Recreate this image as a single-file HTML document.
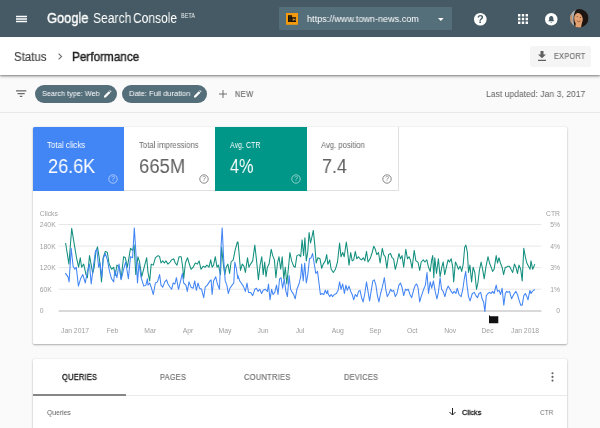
<!DOCTYPE html>
<html><head><meta charset="utf-8">
<style>
*{box-sizing:border-box;margin:0;padding:0}
html,body{width:600px;height:428px;overflow:hidden;background:#fafafa;font-family:"Liberation Sans",sans-serif;}
.abs{position:absolute}
#hdr{left:0;top:0;width:600px;height:37px;background:#455a64}
#crumb{left:0;top:37px;width:600px;height:38px;background:#fff;box-shadow:0 1px 1.500px rgba(0,0,0,.33),0 2px 3px rgba(0,0,0,.18)}
.t{position:absolute;white-space:nowrap;line-height:1;transform-origin:0 0;will-change:transform}
svg{will-change:transform}
.chip{position:absolute;top:84.700px;height:18.100px;border-radius:9.050px;background:#546e7a}
.card{border-radius:1.500px;overflow:hidden;position:absolute;left:33px;width:534px;background:#fff;box-shadow:0 1px 2px rgba(0,0,0,.3),0 0 1px rgba(0,0,0,.2)}
.tile{position:absolute;top:0;height:64px;width:91px}
</style></head><body>
<div class="abs" id="hdr"></div>
<div class="abs" id="crumb"></div>

<!-- header content -->
<svg class="abs" style="left:15.700px;top:15px" width="11" height="8" viewBox="0 0 11 8"><path d="M0 1.450h11M0 4h11M0 6.550h11" stroke="#fff" stroke-width="1.400"/></svg>
<div class="abs" style="left:279px;top:7px;width:173px;height:23px;background:#546e7a;border-radius:1px"></div>
<svg class="abs" style="left:286px;top:12.900px" width="12" height="11.800" viewBox="0 0 12 11.800"><rect width="12" height="11.800" fill="#f39a0f"/><path d="M2 2.300h4.100v2h3.900v4.600H2z" fill="#15100a"/><path d="M2.700 3.500h2.600M2.700 5h2.600M2.700 6.500h2.600M2.700 8h2.600" stroke="#6b4a10" stroke-width=".5"/><path d="M6.700 5.300h.8v1h1.300v-1h.6v2.800h-.6v-1H7.500v1h-.8z" fill="#f0a23a"/></svg>
<svg class="abs" style="left:437.600px;top:17.500px" width="5.600" height="3" viewBox="0 0 5.600 3"><path d="M0 0h5.600L2.800 3z" fill="#fff"/></svg>
<!-- help -->
<svg class="abs" style="left:474.100px;top:12.600px" width="12.600" height="12.600" viewBox="0 0 12.600 12.600"><circle cx="6.300" cy="6.300" r="6.300" fill="#fff"/><text x="6.300" y="10.200" font-size="11" font-weight="bold" fill="#455a64" text-anchor="middle" font-family="Liberation Sans, sans-serif">?</text></svg>
<!-- apps -->
<svg class="abs" style="left:518px;top:14px" width="10" height="10" viewBox="0 0 10 10" fill="#fff"><path d="M0 0h2.4v2.4H0zM3.8 0h2.4v2.4H3.8zM7.6 0H10v2.4H7.6zM0 3.8h2.4v2.4H0zM3.800 3.8h2.4v2.4H3.8zM7.6 3.8H10v2.4H7.6zM0 7.6h2.4V10H0zM3.8 7.6h2.4V10H3.8zM7.6 7.6H10V10H7.6z"/></svg>
<!-- bell -->
<svg class="abs" style="left:544.600px;top:12.500px" width="12.500" height="12.500" viewBox="0 0 12.500 12.500"><circle cx="6.250" cy="6.250" r="6.250" fill="#fff"/><path d="M6.250 3c-1.400 0-2.100 1-2.100 2.300v1.800l-.8.800v.400h5.800v-.400l-.8-.800V5.300c0-1.300-.7-2.300-2.100-2.300zM5.500 8.900a.75.750 0 0 0 1.500 0z" fill="#455a64"/></svg>
<!-- avatar -->
<svg class="abs" style="left:570px;top:9.400px" width="18.500" height="18.500" viewBox="0 0 18.500 18.500"><defs><clipPath id="av"><circle cx="9.250" cy="9.250" r="9.250"/></clipPath></defs><g clip-path="url(#av)"><rect width="18.500" height="18.500" fill="#1d1512"/><path d="M0 0h6.500C3.500 3 2.500 12 5 18.500H0z" fill="#aab4b8"/><path d="M0 6l2.500-.5v9L0 15z" fill="#c98a5c" opacity=".7"/><ellipse cx="8.600" cy="9.300" rx="4.400" ry="6.600" fill="#e3a070"/><path d="M6 13h6l-1 6H5z" fill="#e3a070"/><path d="M5 5.500C6 2 10 1.500 12.500 4 13.500 6 13.800 8 13 11 12.600 7 11 4.500 8.500 4 7 4 6 4.500 5 6z" fill="#1d1512"/><circle cx="7.200" cy="7.600" r=".6" fill="#7a5a48"/><circle cx="10.400" cy="8.400" r=".6" fill="#6a4030"/><path d="M6.800 11.800q2 1.600 4 0" stroke="#8a4a2c" stroke-width=".7" fill="none"/></g></svg>

<!-- breadcrumb -->
<svg class="abs" style="left:57.800px;top:53.100px" width="4.500" height="7" viewBox="0 0 4.500 7"><path d="M.6.600L3.600 3.500.6 6.400" stroke="#6e6e6e" stroke-width="1.100" fill="none"/></svg>
<div class="abs" style="left:530px;top:46px;width:61px;height:21px;background:#f5f5f5;border-radius:2px"></div>
<svg class="abs" style="left:538px;top:51px" width="8" height="10" viewBox="0 0 8 10"><path d="M2.500 0h3v3.500H8L4 7.200 0 3.500h2.500zM0 8.700h8V10H0z" fill="#616161"/></svg>

<!-- filter bar -->
<svg class="abs" style="left:16px;top:90px" width="11" height="8" viewBox="0 0 11 8"><path d="M0 .900h10.300M1.500 3.700h7.200M3.900 6.400h2.400" stroke="#686868" stroke-width="1.250"/></svg>
<div class="chip" style="left:35px;width:82px"></div>
<svg class="abs" style="left:103.800px;top:90.200px" width="7.600" height="7.600" viewBox="0 0 8 8"><path d="M0 8v-1.800L5 1.200 6.800 3 1.800 8zM5.600.600L6.200 0l1.800 1.800-.6.600z" fill="#fff"/></svg>
<div class="chip" style="left:122px;width:85px"></div>
<svg class="abs" style="left:194.200px;top:90.200px" width="7.600" height="7.600" viewBox="0 0 8 8"><path d="M0 8v-1.800L5 1.200 6.800 3 1.800 8zM5.600.600L6.200 0l1.800 1.800-.6.600z" fill="#fff"/></svg>
<svg class="abs" style="left:219px;top:90px" width="8" height="8" viewBox="0 0 8 8"><path d="M4 0v8M0 4h8" stroke="#616161" stroke-width=".900"/></svg>
<div class="abs" style="left:0;top:112px;width:600px;height:1px;background:#e8e8e8"></div>

<!-- card 1 -->
<div class="card" style="top:126.700px;height:217px">
  <div class="tile" style="left:0;background:#4285f4"></div>
  <div class="tile" style="left:91px;background:#fff;border-bottom:1px solid #e0e0e0"></div>
  <div class="tile" style="left:182.200px;width:91.800px;background:#009688"></div>
  <div class="tile" style="left:274px;width:92px;background:#fff;border-bottom:1px solid #e0e0e0;border-right:1px solid #e0e0e0"></div>
</div>

<svg class="abs" style="left:107.55px;top:174.40px;opacity:.65" width="10" height="10" viewBox="0 0 10 10"><circle cx="5" cy="5" r="4.200" fill="none" stroke="#fff" stroke-width=".850"/><text x="5" y="7.400" font-size="6.600" fill="#fff" text-anchor="middle" font-family="Liberation Sans, sans-serif">?</text></svg>
<svg class="abs" style="left:198.60px;top:174.40px;opacity:.9" width="10" height="10" viewBox="0 0 10 10"><circle cx="5" cy="5" r="4.200" fill="none" stroke="#616161" stroke-width=".850"/><text x="5" y="7.400" font-size="6.600" fill="#616161" text-anchor="middle" font-family="Liberation Sans, sans-serif">?</text></svg>
<svg class="abs" style="left:290.50px;top:174.40px;opacity:.65" width="10" height="10" viewBox="0 0 10 10"><circle cx="5" cy="5" r="4.200" fill="none" stroke="#fff" stroke-width=".850"/><text x="5" y="7.400" font-size="6.600" fill="#fff" text-anchor="middle" font-family="Liberation Sans, sans-serif">?</text></svg>
<svg class="abs" style="left:381.60px;top:174.40px;opacity:.9" width="10" height="10" viewBox="0 0 10 10"><circle cx="5" cy="5" r="4.200" fill="none" stroke="#616161" stroke-width=".850"/><text x="5" y="7.400" font-size="6.600" fill="#616161" text-anchor="middle" font-family="Liberation Sans, sans-serif">?</text></svg>
<!-- chart svg -->
<svg class="abs" id="chart" style="left:0;top:200px" width="600" height="145" viewBox="0 200 600 145" font-family="Liberation Sans, sans-serif">
<path d="M58.6 224.55H541.3" stroke="#e7e7e7" stroke-width="1"/>
<path d="M58.6 246.10H541.3" stroke="#e7e7e7" stroke-width="1"/>
<path d="M58.6 267.65H541.3" stroke="#e7e7e7" stroke-width="1"/>
<path d="M58.6 289.20H541.3" stroke="#e7e7e7" stroke-width="1"/>
<path d="M58.600 310.900H541.500" stroke="#cdcdcd" stroke-width="1.500"/>
<g font-size="6.800" fill="#9e9e9e">
<text x="39.800" y="216">Clicks</text>
<text x="39.800" y="227.0">240K</text>
<text x="39.800" y="248.5">180K</text>
<text x="39.800" y="270.0">120K</text>
<text x="39.800" y="291.5">60K</text>
<text x="39.800" y="313.0">0</text>
<text x="560" y="216" text-anchor="end">CTR</text>
<text x="560" y="227.0" text-anchor="end">5%</text>
<text x="560" y="248.5" text-anchor="end">4%</text>
<text x="560" y="270.0" text-anchor="end">3%</text>
<text x="560" y="291.5" text-anchor="end">1%</text>
<text x="560" y="313.0" text-anchor="end">0</text>
<text x="75.0" y="332.800" text-anchor="middle">Jan 2017</text>
<text x="112.5" y="332.800" text-anchor="middle">Feb</text>
<text x="150.2" y="332.800" text-anchor="middle">Mar</text>
<text x="188.0" y="332.800" text-anchor="middle">Apr</text>
<text x="225.0" y="332.800" text-anchor="middle">May</text>
<text x="263.0" y="332.800" text-anchor="middle">Jun</text>
<text x="300.0" y="332.800" text-anchor="middle">Jul</text>
<text x="337.7" y="332.800" text-anchor="middle">Aug</text>
<text x="375.2" y="332.800" text-anchor="middle">Sep</text>
<text x="412.2" y="332.800" text-anchor="middle">Oct</text>
<text x="450.2" y="332.800" text-anchor="middle">Nov</text>
<text x="487.5" y="332.800" text-anchor="middle">Dec</text>
<text x="525.0" y="332.800" text-anchor="middle">Jan 2018</text>
</g>
<path d="M65.6 243.0 68.9 264.1 71.7 228.3 74.4 245.1 76.5 257.7 78.6 267.2 80.3 257.7 81.6 267.2 83.7 264.1 86.0 274.6 87.4 277.7 89.5 255.6 91.6 267.2 92.7 273.5 94.2 267.2 95.9 251.4 97.5 246.8 99.4 258.8 101.5 281.9 103.2 257.7 105.3 251.4 107.4 252.5 109.1 264.1 111.6 269.3 113.7 267.2 115.2 275.6 116.9 265.1 119.4 267.2 121.1 278.8 123.6 256.7 125.3 257.7 127.4 267.2 130.5 248.3 132.6 250.4 134.1 245.1 135.8 274.6 137.9 256.7 139.6 262.0 141.7 276.7 144.2 267.2 146.7 257.7 148.0 272.5 149.7 280.9 151.2 264.1 153.3 265.1 155.4 257.7 158.1 255.6 159.6 256.7 161.0 263.0 162.7 260.9 164.4 263.0 165.9 260.9 168.0 264.1 170.1 262.0 171.6 259.9 173.7 258.8 175.3 263.0 177.0 265.1 179.1 256.7 181.2 256.7 182.7 267.2 183.7 278.8 185.4 263.0 187.5 257.7 189.0 263.0 191.1 269.3 193.2 267.2 195.3 263.0 197.4 264.1 199.1 260.9 201.0 269.3 203.1 266.2 205.2 267.2 206.9 265.1 209.0 267.2 210.7 259.9 212.1 267.2 213.6 265.1 215.3 256.7 217.0 267.2 218.4 265.1 220.5 274.6 221.6 247.2 223.3 264.1 224.8 274.6 226.2 267.2 227.9 264.1 229.6 273.5 231.1 262.0 233.2 259.9 235.3 249.3 237.4 242.0 238.0 242.0 239.1 253.5 240.5 270.4 242.2 264.1 243.9 266.2 245.4 272.5 247.5 257.7 248.9 267.2 250.6 264.1 252.7 260.9 254.8 245.1 256.5 259.9 258.4 279.8 260.1 265.1 261.8 256.7 263.2 274.6 264.7 262.0 266.0 276.7 267.4 267.2 269.1 264.1 271.2 249.3 272.7 255.6 274.4 259.9 275.9 277.7 277.5 263.0 279.0 256.7 280.7 269.3 282.2 256.7 283.8 278.8 285.3 267.2 286.8 284.0 288.5 267.2 289.9 252.5 291.6 260.9 293.7 266.2 295.2 267.2 296.9 255.6 299.0 254.6 300.7 256.7 302.1 239.9 303.6 255.6 304.9 237.8 306.3 260.9 307.8 251.4 309.1 232.5 310.5 243.0 312.0 236.7 313.3 230.4 314.8 245.1 316.2 263.0 317.9 257.7 320.0 258.8 321.7 268.3 323.2 264.1 325.3 260.9 326.7 254.6 327.8 264.1 328.0 264.1 329.7 259.9 331.2 269.3 333.3 272.5 335.4 269.3 337.5 262.0 339.6 243.0 341.0 256.7 342.7 252.5 344.2 256.7 346.3 242.0 347.6 251.4 349.0 265.1 350.7 252.5 352.2 260.9 353.7 259.9 355.3 251.4 356.8 258.8 358.5 256.7 360.0 258.8 361.6 259.9 363.3 257.7 364.8 260.9 366.5 251.4 368.0 262.0 370.1 258.8 372.2 252.5 373.8 246.2 375.3 249.3 376.8 254.6 378.5 252.5 380.1 263.0 382.3 248.3 383.7 254.6 385.2 256.7 386.9 268.3 388.6 254.6 390.5 253.5 392.1 257.7 393.6 258.8 395.3 269.3 397.0 263.0 398.9 253.5 400.5 258.8 402.0 255.6 403.7 267.2 405.8 249.3 407.5 258.8 409.0 256.7 410.4 259.9 412.1 268.3 414.2 250.4 415.9 260.9 417.8 262.0 418.0 262.0 419.7 270.4 421.2 262.0 423.3 259.9 424.9 262.0 426.8 259.9 428.5 267.2 430.2 271.4 431.7 259.9 432.7 255.6 433.8 277.7 434.8 257.7 436.5 273.5 438.4 258.8 440.1 276.7 441.8 267.2 443.2 262.0 444.7 274.6 446.4 267.2 448.1 259.9 449.5 262.0 451.2 258.8 452.7 267.2 453.7 281.9 455.4 262.0 456.9 265.1 458.4 269.3 460.1 266.2 461.7 271.4 463.2 264.1 464.7 247.2 465.9 245.1 467.4 252.5 468.5 272.5 469.9 265.1 471.6 281.9 473.1 267.2 474.8 272.5 476.5 289.3 477.9 283.0 479.4 270.4 481.1 262.0 482.8 270.4 484.2 278.8 485.9 267.2 488.0 256.7 489.5 263.0 491.2 267.2 492.6 271.4 494.1 269.3 496.2 255.6 497.5 263.0 499.0 257.7 500.4 263.0 502.1 267.2 503.6 274.6 505.3 267.2 506.7 267.2 507.8 266.2 509.5 266.2 511.0 269.3 512.7 272.5 514.4 264.1 515.9 267.2 517.5 273.5 519.0 265.1 520.7 269.3 522.2 280.9 523.8 248.3 525.3 256.7 526.8 263.0 528.5 266.2 530.1 269.3 531.0 260.9 532.7 269.3 534.8 264.1" fill="none" stroke="#128f7e" stroke-width="1.050" stroke-linejoin="round"/>
<path d="M65.4 273.1 68.1 277.1 69.1 281.9 71.2 248.3 73.1 266.2 74.8 269.3 76.3 267.2 78.4 286.1 80.7 278.4 82.8 274.6 85.3 283.0 87.4 271.4 89.5 264.1 91.2 284.0 93.3 267.2 95.4 251.4 96.9 249.3 98.6 267.2 100.1 263.0 101.7 277.7 103.2 258.8 105.3 253.5 107.4 259.9 109.5 271.4 111.6 278.8 113.7 281.9 114.8 270.4 116.9 277.7 119.0 264.1 121.1 279.8 123.6 269.3 125.7 262.0 128.4 278.8 130.5 256.7 132.6 257.7 134.3 227.9 135.8 251.4 137.5 283.0 139.0 263.0 141.1 277.7 143.8 286.1 145.9 285.1 147.4 278.8 148.0 285.1 149.7 283.0 151.2 287.2 153.3 294.5 155.4 283.0 157.5 281.9 159.6 274.6 161.0 285.1 162.7 287.2 164.8 281.9 166.5 279.8 168.0 284.0 170.1 287.2 171.6 289.3 173.2 283.0 174.9 284.0 176.4 277.7 178.5 289.3 180.6 280.9 182.3 273.5 183.7 283.0 185.9 285.1 187.3 291.4 189.0 281.9 191.1 287.2 193.2 288.2 194.7 280.9 196.4 290.3 198.0 283.0 199.5 288.2 201.6 289.3 203.7 297.7 205.2 287.2 207.3 285.1 210.0 280.9 211.1 279.8 212.1 294.5 213.6 280.9 215.7 276.7 217.4 284.0 219.5 289.3 221.0 247.2 222.2 227.9 223.7 259.9 225.2 280.9 226.9 285.1 228.3 293.5 230.0 288.2 232.1 285.1 233.8 283.0 234.8 262.0 236.3 268.3 237.8 278.8 238.0 275.6 239.7 280.9 241.2 283.0 243.3 286.1 245.4 291.4 247.0 283.0 248.5 292.4 250.6 292.4 252.7 295.6 254.8 289.3 256.5 288.2 258.0 291.4 259.7 289.3 261.6 293.5 263.2 290.3 265.3 289.3 267.4 291.4 268.5 284.0 270.0 299.8 271.6 289.3 273.1 294.5 274.8 292.4 276.5 285.1 278.0 294.5 279.6 278.8 281.1 277.7 282.6 288.2 284.3 278.8 285.9 291.4 287.4 296.6 289.1 275.6 290.6 289.3 292.3 292.4 293.7 294.5 295.2 298.8 296.9 289.3 299.0 284.0 300.7 276.7 301.7 264.1 303.2 280.9 304.7 263.0 306.3 283.0 307.8 274.6 309.5 258.8 311.2 257.7 312.6 253.5 314.1 263.0 315.8 273.5 317.5 271.4 319.0 283.0 320.4 294.5 322.1 293.5 323.8 294.5 325.3 290.3 326.7 293.5 327.8 290.3 328.0 293.5 329.7 296.6 331.2 294.5 332.6 296.6 334.3 294.5 336.4 293.5 338.1 290.3 339.6 281.9 341.0 289.3 342.7 284.0 344.4 293.5 345.9 285.1 347.3 290.3 349.0 286.1 350.7 291.4 352.2 294.5 353.7 299.8 355.3 294.5 357.0 296.6 358.5 291.4 360.0 290.3 361.6 297.7 363.1 301.9 364.8 293.5 366.5 281.9 368.0 291.4 369.6 300.9 371.1 291.4 372.8 280.9 374.3 279.8 375.9 285.1 377.4 295.6 378.9 301.9 380.6 293.5 382.3 287.2 384.4 277.7 385.8 289.3 387.3 296.6 389.0 293.5 390.7 289.3 392.1 291.4 393.6 290.3 395.3 296.6 397.0 293.5 398.9 285.1 400.5 283.0 402.0 287.2 403.7 295.6 405.4 289.3 406.9 290.3 408.3 289.3 410.0 294.5 411.7 297.7 413.8 289.3 415.3 285.1 416.7 284.0 417.8 287.2 418.0 287.2 419.7 301.9 421.2 296.6 423.3 290.3 425.4 285.1 427.0 272.5 428.5 293.5 430.2 281.9 431.7 288.2 433.4 280.9 435.2 291.4 436.9 298.8 438.4 292.4 440.1 277.7 441.6 289.3 443.2 291.4 444.9 296.6 446.4 290.3 448.1 286.1 449.5 288.2 451.2 291.4 452.7 293.5 454.2 291.4 455.9 293.5 457.3 288.2 459.0 294.5 461.1 296.6 462.8 289.3 464.3 278.8 465.7 271.4 467.0 285.1 468.5 296.6 470.1 300.9 472.3 293.5 474.4 292.4 475.8 295.6 477.5 297.7 479.0 293.5 480.7 292.4 482.1 298.8 483.6 301.9 484.9 311.4 486.3 295.6 488.0 293.5 489.5 292.4 491.2 293.5 492.6 291.4 494.1 293.5 496.2 285.1 497.5 291.4 499.0 290.3 500.6 294.5 502.1 288.2 503.8 305.1 505.3 293.5 506.7 291.4 507.8 292.4 509.5 291.4 511.6 298.8 513.7 294.5 515.9 291.4 517.5 294.5 519.0 299.8 520.7 305.1 522.2 305.1 523.8 295.6 525.3 293.5 526.8 296.6 528.0 299.8 529.9 290.3 531.0 293.5 532.3 291.4 533.7 290.3 534.8 289.3" fill="none" stroke="#4285f4" stroke-width="1.050" stroke-linejoin="round"/>
<path d="M489 315l1.500 1.300h7.800v7H489z" fill="#111"/>
</svg>

<!-- card 2 -->
<div class="card" style="top:358.600px;height:80px"></div>
<div class="abs" style="left:33px;top:395px;width:534px;height:1px;background:#e9e9e9"></div>
<div class="abs" style="left:33px;top:394.200px;width:93.400px;height:1.800px;background:#868686"></div>
<svg class="abs" style="left:550.600px;top:372px" width="3" height="10" viewBox="0 0 3 10" fill="#616161"><circle cx="1.500" cy="1.200" r="1.050"/><circle cx="1.500" cy="4.900" r="1.050"/><circle cx="1.500" cy="8.600" r="1.050"/></svg>
<svg class="abs" style="left:449px;top:408px" width="7" height="8" viewBox="0 0 7 8"><path d="M3.500 0v7M.5 4l3 3 3-3" stroke="#212121" stroke-width="1" fill="none"/></svg>
<div class="t" id="logoG" style="left:46.90px;top:10.69px;font-size:14.53px;color:#fff;transform:scaleX(0.8844);-webkit-text-stroke:.35px #fff">Google</div>
<div class="t" id="logoS" style="left:93.20px;top:10.69px;font-size:14.53px;color:#fff;transform:scaleX(0.8326);">Search</div>
<div class="t" id="logoC" style="left:132.60px;top:10.69px;font-size:14.53px;color:#fff;transform:scaleX(0.8260);">Console</div>
<div class="t" id="beta" style="left:180.50px;top:11.85px;font-size:7.27px;color:#eceff1;transform:scaleX(0.7593);">BETA</div>
<div class="t" id="url" style="left:307.00px;top:14.50px;font-size:9.16px;color:#fff;transform:scaleX(0.9905);">https://www.town-news.com</div>
<div class="t" id="status" style="left:14.25px;top:50.76px;font-size:12.21px;color:#424242;transform:scaleX(0.9391);-webkit-text-stroke:.15px #424242">Status</div>
<div class="t" id="perf" style="left:72.00px;top:50.79px;font-size:12.35px;color:#212121;transform:scaleX(0.9516);-webkit-text-stroke:.4px #212121">Performance</div>
<div class="t" id="export" style="left:553.70px;top:53.11px;font-size:8.14px;color:#757575;transform:scaleX(0.8859);-webkit-text-stroke:.2px #757575;letter-spacing:.4px">EXPORT</div>
<div class="t" id="chip1" style="left:42.30px;top:90.15px;font-size:7.85px;color:#fff;transform:scaleX(0.9276);">Search type: Web</div>
<div class="t" id="chip2" style="left:128.70px;top:90.15px;font-size:7.85px;color:#fff;transform:scaleX(0.9564);">Date: Full duration</div>
<div class="t" id="new" style="left:235.30px;top:91.14px;font-size:8.28px;color:#616161;transform:scaleX(0.8818);-webkit-text-stroke:.1px #616161;letter-spacing:.6px">NEW</div>
<div class="t" id="upd" style="left:485.60px;top:88.55px;font-size:9.45px;color:#616161;transform:scaleX(0.9088);">Last updated: Jan 3, 2017</div>
<div class="t" id="l1" style="left:47.00px;top:140.62px;font-size:8.72px;color:#fff;transform:scaleX(0.9062);">Total clicks</div>
<div class="t" id="n1" style="left:47.50px;top:156.20px;font-size:20.49px;color:#fff;transform:scaleX(0.8833);">26.6K</div>
<div class="t" id="l2" style="left:138.70px;top:140.62px;font-size:8.72px;color:#6a6a6a;transform:scaleX(0.8833);">Total impressions</div>
<div class="t" id="n2" style="left:139.30px;top:156.20px;font-size:20.49px;color:#616161;transform:scaleX(0.9015);">665M</div>
<div class="t" id="l3" style="left:229.60px;top:140.62px;font-size:8.72px;color:#fff;transform:scaleX(0.8103);">Avg. CTR</div>
<div class="t" id="n3" style="left:230.00px;top:156.20px;font-size:20.49px;color:#fff;transform:scaleX(0.7903);">4%</div>
<div class="t" id="l4" style="left:321.10px;top:140.62px;font-size:8.72px;color:#6a6a6a;transform:scaleX(0.8801);">Avg. position</div>
<div class="t" id="n4" style="left:321.50px;top:156.20px;font-size:20.49px;color:#616161;transform:scaleX(0.8742);">7.4</div>
<div class="t" id="tab1" style="left:62.00px;top:373.72px;font-size:8.21px;color:#212121;transform:scaleX(0.9018);-webkit-text-stroke:.35px #212121;letter-spacing:.3px">QUERIES</div>
<div class="t" id="tab2" style="left:160.30px;top:373.72px;font-size:8.21px;color:#757575;transform:scaleX(0.8947);-webkit-text-stroke:.2px #757575;letter-spacing:.3px">PAGES</div>
<div class="t" id="tab3" style="left:244.20px;top:373.72px;font-size:8.21px;color:#757575;transform:scaleX(0.9115);-webkit-text-stroke:.2px #757575;letter-spacing:.3px">COUNTRIES</div>
<div class="t" id="tab4" style="left:343.90px;top:373.72px;font-size:8.21px;color:#757575;transform:scaleX(0.8997);-webkit-text-stroke:.2px #757575;letter-spacing:.3px">DEVICES</div>
<div class="t" id="q" style="left:47.00px;top:408.53px;font-size:7.70px;color:#616161;transform:scaleX(0.8840);">Queries</div>
<div class="t" id="clk" style="left:461.70px;top:408.53px;font-size:7.70px;color:#212121;transform:scaleX(0.9415);-webkit-text-stroke:.3px #212121">Clicks</div>
<div class="t" id="ctr" style="left:540.00px;top:408.53px;font-size:7.70px;color:#757575;transform:scaleX(0.8411);">CTR</div>
</body></html>
